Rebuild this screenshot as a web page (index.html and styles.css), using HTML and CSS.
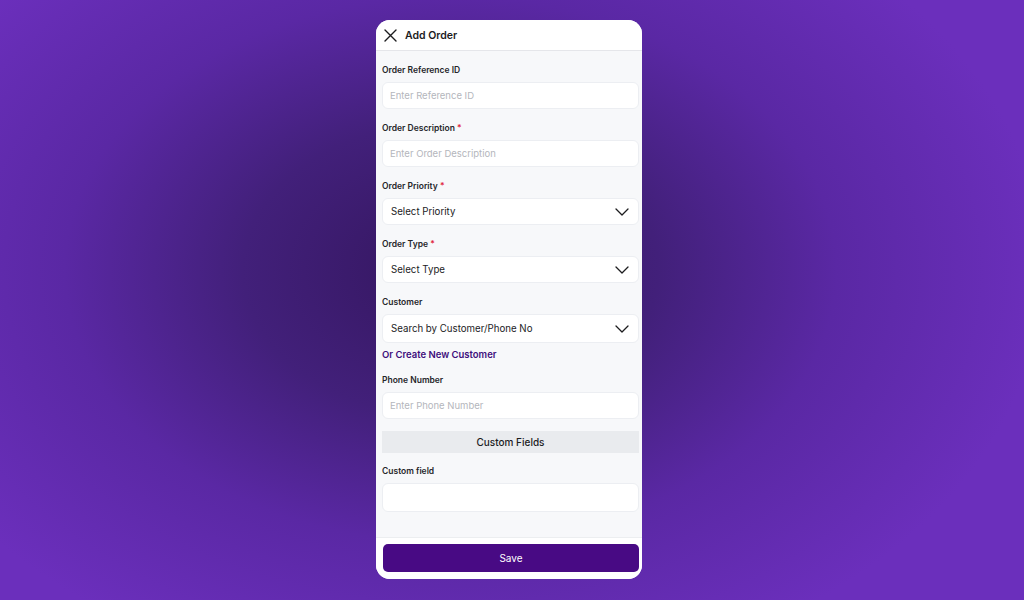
FILE: index.html
```html
<!DOCTYPE html>
<html lang="en">
<head>
  <meta charset="UTF-8" />
  <meta name="viewport" content="width=device-width, initial-scale=1.0"/>
  <title>Add Order</title>
  <link rel="stylesheet" href="styles.css">
</head>
<body>
  <div class="phone">
    <div class="header">
      <svg class="close-icon" width="13" height="13" viewBox="0 0 13 13">
        <path d="M1 1 L12 12 M12 1 L1 12" stroke="#1c1c1e" stroke-width="1.4" fill="none" stroke-linecap="round"/>
      </svg>
      <span class="title">Add Order</span>
    </div>

    <div class="form">
      <div class="field">
        <label>Order Reference ID</label>
        <div class="input placeholder">Enter Reference ID</div>
      </div>

      <div class="field">
        <label>Order Description <span class="req">*</span></label>
        <div class="input placeholder">Enter Order Description</div>
      </div>

      <div class="field">
        <label>Order Priority <span class="req">*</span></label>
        <div class="input select">
          <span>Select Priority</span>
          <svg width="14" height="8" viewBox="0 0 14 8"><path d="M1 1 L7 7 L13 1" stroke="#1c1c1e" stroke-width="1.3" fill="none" stroke-linecap="round" stroke-linejoin="round"/></svg>
        </div>
      </div>

      <div class="field">
        <label>Order Type <span class="req">*</span></label>
        <div class="input select">
          <span>Select Type</span>
          <svg width="14" height="8" viewBox="0 0 14 8"><path d="M1 1 L7 7 L13 1" stroke="#1c1c1e" stroke-width="1.3" fill="none" stroke-linecap="round" stroke-linejoin="round"/></svg>
        </div>
      </div>

      <div class="field customer">
        <label>Customer</label>
        <div class="input select tall">
          <span>Search by Customer/Phone No</span>
          <svg width="14" height="8" viewBox="0 0 14 8"><path d="M1 1 L7 7 L13 1" stroke="#1c1c1e" stroke-width="1.3" fill="none" stroke-linecap="round" stroke-linejoin="round"/></svg>
        </div>
        <a class="create-link" href="#">Or Create New Customer</a>
      </div>

      <div class="field">
        <label>Phone Number</label>
        <div class="input placeholder">Enter Phone Number</div>
      </div>

      <div class="section-bar">Custom Fields</div>

      <div class="field">
        <label>Custom field</label>
        <div class="input tall"></div>
      </div>
    </div>

    <div class="footer">
      <button class="save-button">Save</button>
    </div>
  </div>
</body>
</html>
```

FILE: styles.css
```css
* {
  box-sizing: border-box;
}

body {
  margin: 0;
  height: 600px;
  font-family: Inter, 'Noto Sans', sans-serif;
  display: flex;
  justify-content: center;
  align-items: flex-start;
  padding: 20px 6px 0 0;
  background: radial-gradient(ellipse 58% 70% at 44% 45%, #34165f 0%, #42207a 35%, #5a28a4 65%, #6b2fbc 100%);
  overflow: hidden;
}

.phone {
  width: 266px;
  height: 559px;
  background-color: #f7f8fa;
  border-radius: 14px;
  overflow: hidden;
  display: flex;
  flex-direction: column;
  color: #1c1c1e;
}

.header {
  height: 31px;
  background-color: #ffffff;
  border-bottom: 1px solid #e5e6ea;
  display: flex;
  align-items: center;
  gap: 8px;
  padding: 0 8px;
  flex-shrink: 0;
}

.close-icon {
  display: block;
}

.title {
  font-size: 10.5px;
  font-weight: 600;
}

.form {
  flex: 1;
  padding: 12px 3px 0 6px;
}

.field {
  display: flex;
  flex-direction: column;
  margin-bottom: 12px;
}

.field label {
  font-size: 8.5px;
  font-weight: 600;
  line-height: 14px;
  margin-bottom: 5px;
  color: #26262a;
}

.req {
  color: #e0243a;
}

.input {
  height: 27px;
  background-color: #ffffff;
  border: 1px solid #eceef2;
  border-radius: 6px;
  font-size: 9.7px;
  padding: 0 7px;
  display: flex;
  align-items: center;
}

.input.tall {
  height: 29px;
}

.placeholder {
  color: #b4b6bc;
  font-size: 9.5px;
}

.select {
  justify-content: space-between;
  color: #1c1c1e;
  padding: 0 9px 0 8px;
}

.customer {
  margin-bottom: 11px;
}

.create-link {
  font-size: 9.5px;
  font-weight: 600;
  color: #3e0f7c;
  text-decoration: none;
  margin-top: 5px;
  line-height: 14px;
}

.section-bar {
  height: 22px;
  background-color: #e9ebee;
  font-size: 10px;
  font-weight: 500;
  display: flex;
  align-items: center;
  justify-content: center;
  margin-bottom: 11px;
}

.footer {
  height: 42px;
  background-color: #ffffff;
  border-top: 1px solid #eceef0;
  padding: 6px 3px 0 7px;
  flex-shrink: 0;
}

.save-button {
  width: 100%;
  height: 28px;
  border: none;
  border-radius: 5px;
  background-color: #480a84;
  color: #ffffff;
  font-family: Inter, 'Noto Sans', sans-serif;
  font-size: 10px;
  cursor: pointer;
}
```
